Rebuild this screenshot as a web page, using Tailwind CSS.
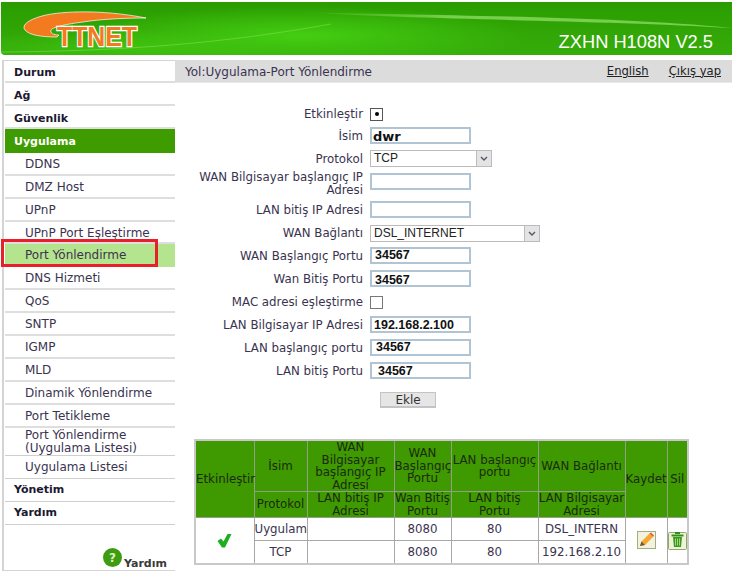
<!DOCTYPE html>
<html lang="tr">
<head>
  <meta charset="UTF-8" />
  <title>ZXHN H108N V2.5</title>
  <script src="https://cdn.jsdelivr.net/npm/@tailwindcss/browser@4"></script>
</head>
<body class="bg-white w-[732px] h-[574px] overflow-hidden font-['DejaVu_Sans',sans-serif] text-[12px] text-[#3a3350]">

  <!-- header -->
  <div class="relative h-[53px] mt-[2px] ml-[1px] rounded-bl-[4px] overflow-hidden bg-gradient-to-b from-[#2a9c00] to-[#36ad0b]">
    <svg class="absolute inset-0" width="731" height="53" viewBox="0 0 731 53">
      <defs>
        <radialGradient id="glow" cx="0.5" cy="0.5" r="0.5">
          <stop offset="0" stop-color="#45d012" stop-opacity="0.95"/>
          <stop offset="1" stop-color="#45d012" stop-opacity="0"/>
        </radialGradient>
        <linearGradient id="band" x1="0" x2="1" y1="0" y2="0">
          <stop offset="0" stop-color="#8fe060" stop-opacity="0"/>
          <stop offset="0.35" stop-color="#8fe060" stop-opacity="0.75"/>
          <stop offset="1" stop-color="#a5e880" stop-opacity="0.6"/>
        </linearGradient>
      </defs>
      <ellipse cx="300" cy="34" rx="230" ry="30" fill="url(#glow)"/>
      <ellipse cx="120" cy="46" rx="170" ry="18" fill="url(#glow)" opacity="0.6"/>
      <path d="M300 10C420 14 600 13 731 26C600 18 420 18 300 10Z" fill="url(#band)"/>
      <path d="M0 50C120 49 220 42 330 22" stroke="#86e055" stroke-width="1" fill="none" opacity="0.55"/>
      <path d="M145 16C110 9 70 8 45 13C28 17 20 23 24 28C28 33 40 35 56 35L58 33C52 33 49 31 50 28C52 25 66 22 82 20C100 17 125 16 145 16Z" fill="#f47a20" stroke="#fff" stroke-width="0.7"/>
      <text x="56" y="44" font-family="'Liberation Sans',sans-serif" font-size="28" font-weight="700" fill="#f47a20" stroke="#fff" stroke-width="2.4" paint-order="stroke" textLength="80" lengthAdjust="spacingAndGlyphs">TTNET</text>
    </svg>
    <div class="absolute right-[19px] bottom-[2px] font-['Liberation_Sans',sans-serif] text-[18.3px] leading-[22px] text-white">ZXHN H108N V2.5</div>
  </div>

  <div class="flex mt-[5px] ml-[2px]">
    <!-- sidebar -->
    <nav class="relative w-[173px] h-[511px] border-l-2 border-t border-b border-[#d4d4d4] pl-[1px]">
      <div class="h-[22px] pl-[9px] leading-[24px] font-bold text-[11px] text-[#1c1830] border-b-2 border-[#dedede]">Durum</div>
      <div class="h-[23px] pl-[9px] leading-[25px] font-bold text-[11px] text-[#1c1830] border-b-2 border-[#dedede]">Ağ</div>
      <div class="h-[23px] pl-[9px] leading-[25px] font-bold text-[11px] text-[#1c1830] border-b-2 border-[#dedede]">Güvenlik</div>
      <div class="h-[24px] pl-[9px] leading-[25px] font-bold text-[11px] text-white bg-[#3f9c00]">Uygulama</div>
      <div class="h-[23px] pl-[20px] leading-[22px] border-b-2 border-[#dedede]">DDNS</div>
      <div class="h-[23px] pl-[20px] leading-[22px] border-b-2 border-[#dedede]">DMZ Host</div>
      <div class="h-[23px] pl-[20px] leading-[22px] border-b-2 border-[#dedede]">UPnP</div>
      <div class="h-[22px] pl-[20px] leading-[22px] border-b-2 border-[#dedede]">UPnP Port Eşleştirme</div>
      <div class="h-[23px] pl-[20px] leading-[23px] bg-[#b5e48f]">Port Yönlendirme</div>
      <div class="h-[23px] pl-[20px] leading-[22px] border-b-2 border-[#dedede]">DNS Hizmeti</div>
      <div class="h-[23px] pl-[20px] leading-[22px] border-b-2 border-[#dedede]">QoS</div>
      <div class="h-[23px] pl-[20px] leading-[22px] border-b-2 border-[#dedede]">SNTP</div>
      <div class="h-[23px] pl-[20px] leading-[22px] border-b-2 border-[#dedede]">IGMP</div>
      <div class="h-[23px] pl-[20px] leading-[22px] border-b-2 border-[#dedede]">MLD</div>
      <div class="h-[23px] pl-[20px] leading-[22px] border-b-2 border-[#dedede]">Dinamik Yönlendirme</div>
      <div class="h-[23px] pl-[20px] leading-[22px] border-b-2 border-[#dedede]">Port Tetikleme</div>
      <div class="h-[28px] pl-[20px] leading-[13px] pt-[1px] border-b border-[#cfcfcf]">Port Yönlendirme<br>(Uygulama Listesi)</div>
      <div class="h-[23px] pl-[20px] leading-[22px] border-b border-[#cfcfcf]">Uygulama Listesi</div>
      <div class="h-[23px] pl-[9px] leading-[22px] font-bold text-[11px] text-[#1c1830] border-b border-[#cfcfcf]">Yönetim</div>
      <div class="h-[23px] pl-[9px] leading-[22px] font-bold text-[11px] text-[#1c1830] border-b border-[#cfcfcf]">Yardım</div>
      <!-- red highlight over the active item -->
      <div class="absolute left-[-3px] top-[178px] w-[157px] h-[28px] border-[3px] border-[#e8202a]"></div>
      <div class="absolute left-[98px] top-[486px] flex items-end gap-[1px]">
        <svg width="21" height="21" viewBox="0 0 21 21">
          <circle cx="10.5" cy="10.5" r="9.5" fill="#3f9c12"/>
          <text x="10.5" y="15" text-anchor="middle" font-family="'DejaVu Sans',sans-serif" font-size="12" font-weight="700" fill="#d8f0c0">?</text>
        </svg>
        <span class="font-bold text-[11px] text-[#3a3a3a] leading-[13px] -mb-[2px]">Yardım</span>
      </div>
    </nav>

    <!-- main -->
    <main class="w-[557px]">
      <div class="h-[23px] pt-[1px] bg-[#dcdcdc] border-b border-[#e8e8e8] flex justify-between items-center pl-[10px] pr-[11px]">
        <span>Yol:Uygulama-Port Yönlendirme</span>
        <span class="flex gap-[20px] text-[11.6px]"><a class="underline text-[#222]">English</a><a class="underline text-[#222]">Çıkış yap</a></span>
      </div>

      <!-- form -->
      <div class="mt-[20px] grid grid-cols-[188px_1fr] gap-x-[7px] items-center text-[11.8px]">
        <label class="h-[22px] leading-[22px] text-right">Etkinleştir</label>
        <div class="h-[22px] flex items-center">
          <span class="w-[13px] h-[13px] border border-[#555] bg-white flex items-center justify-center"><span class="w-[4px] h-[4px] rounded-full bg-black"></span></span>
        </div>

        <label class="h-[23px] leading-[22px] text-right">İsim</label>
        <div class="h-[23px]"><div class="w-[101px] h-[17px] mt-[2px] border-2 border-[#b0c4d4] pl-[1px] font-bold text-[13px] leading-[15px] text-[#111]">dwr</div></div>

        <label class="h-[23px] leading-[22px] text-right">Protokol</label>
        <div class="h-[23px]">
          <div class="w-[122px] h-[17px] mt-[2px] border border-[#bbb] flex justify-between font-['Liberation_Sans',sans-serif] text-[12px] leading-[15px] text-[#222] pl-[3px]">TCP
            <span class="w-[15px] bg-[#e4e4e4] border-l border-[#bbb] flex items-center justify-center"><svg width="8" height="6" viewBox="0 0 8 6"><path d="M1 1l3 3 3-3" fill="none" stroke="#556" stroke-width="1.4"/></svg></span>
          </div>
        </div>

        <label class="h-[28px] leading-[13px] text-right">WAN Bilgisayar başlangıç IP Adresi</label>
        <div class="h-[28px]"><div class="w-[101px] h-[17px] mt-[2px] border-2 border-[#b0c4d4]"></div></div>

        <label class="h-[23px] leading-[22px] text-right">LAN bitiş IP Adresi</label>
        <div class="h-[23px]"><div class="w-[101px] h-[17px] mt-[2px] border-2 border-[#b0c4d4]"></div></div>

        <label class="h-[23px] leading-[22px] text-right">WAN Bağlantı</label>
        <div class="h-[23px]">
          <div class="w-[170px] h-[17px] mt-[3px] border border-[#bbb] flex justify-between font-['Liberation_Sans',sans-serif] text-[12px] leading-[15px] text-[#222] pl-[3px]">DSL_INTERNET
            <span class="w-[15px] bg-[#e4e4e4] border-l border-[#bbb] flex items-center justify-center"><svg width="8" height="6" viewBox="0 0 8 6"><path d="M1 1l3 3 3-3" fill="none" stroke="#556" stroke-width="1.4"/></svg></span>
          </div>
        </div>

        <label class="h-[23px] leading-[22px] text-right">WAN Başlangıç Portu</label>
        <div class="h-[23px]"><div class="w-[101px] h-[17px] mt-[2px] border-2 border-[#b0c4d4] pl-[3px] font-['Liberation_Sans',sans-serif] font-bold text-[#111] text-[12.5px] leading-[12px]">34567</div></div>

        <label class="h-[23px] leading-[22px] text-right">Wan Bitiş Portu</label>
        <div class="h-[23px]"><div class="w-[101px] h-[17px] mt-[2px] border-2 border-[#b0c4d4] pl-[3px] font-['Liberation_Sans',sans-serif] font-bold text-[#111] text-[12.5px] leading-[17px]">34567</div></div>

        <label class="h-[23px] leading-[22px] text-right">MAC adresi eşleştirme</label>
        <div class="h-[23px] flex items-center"><span class="w-[13px] h-[13px] border border-[#777] bg-white"></span></div>

        <label class="h-[23px] leading-[22px] text-right">LAN Bilgisayar IP Adresi</label>
        <div class="h-[23px]"><div class="w-[101px] h-[17px] mt-[2px] border-2 border-[#b0c4d4] pl-[2px] font-['Liberation_Sans',sans-serif] font-bold text-[#111] text-[12.5px] leading-[15px]">192.168.2.100</div></div>

        <label class="h-[23px] leading-[22px] text-right">LAN başlangıç portu</label>
        <div class="h-[23px]"><div class="w-[101px] h-[17px] mt-[2px] border-2 border-[#b0c4d4] pl-[4px] font-['Liberation_Sans',sans-serif] font-bold text-[#111] text-[12.5px] leading-[13px]">34567</div></div>

        <label class="h-[23px] leading-[22px] text-right">LAN bitiş Portu</label>
        <div class="h-[23px]"><div class="w-[101px] h-[17px] mt-[2px] border-2 border-[#b0c4d4] pl-[6px] font-['Liberation_Sans',sans-serif] font-bold text-[#111] text-[12.5px] leading-[15px]">34567</div></div>
      </div>

      <div class="ml-[205px] mt-[9px] w-[56px] h-[16px] bg-[#e6e6e6] border border-[#c4c4c4] border-b-2 text-center leading-[14px] text-[#333]">Ekle</div>

      <!-- table -->
      <table class="mt-[31px] ml-[19px] w-[493px] table-fixed border-collapse border-2 border-[#c8c8c8] text-center text-[11.8px] leading-[12.5px]">
        <colgroup>
          <col class="w-[59px]"><col class="w-[53px]"><col class="w-[87px]"><col class="w-[57px]"><col class="w-[87px]"><col class="w-[87px]"><col class="w-[42px]"><col class="w-[21px]">
        </colgroup>
        <tr class="h-[51px] bg-[#3f9900] text-[#1c2a10]">
          <td rowspan="2" class="border border-[#8f9f88] whitespace-nowrap">Etkinleştir</td>
          <td class="border border-[#8f9f88]">İsim</td>
          <td class="border border-[#8f9f88]">WAN Bilgisayar başlangıç IP Adresi</td>
          <td class="border border-[#8f9f88]">WAN Başlangıç Portu</td>
          <td class="border border-[#8f9f88]">LAN başlangıç portu</td>
          <td class="border border-[#8f9f88]">WAN Bağlantı</td>
          <td rowspan="2" class="border border-[#8f9f88]">Kaydet</td>
          <td rowspan="2" class="border border-[#8f9f88]">Sil</td>
        </tr>
        <tr class="h-[25px] bg-[#3f9900] text-[#1c2a10]">
          <td class="border border-[#8f9f88]">Protokol</td>
          <td class="border border-[#8f9f88]">LAN bitiş IP Adresi</td>
          <td class="border border-[#8f9f88]">Wan Bitiş Portu</td>
          <td class="border border-[#8f9f88]">LAN bitiş Portu</td>
          <td class="border border-[#8f9f88]">LAN Bilgisayar Adresi</td>
        </tr>
        <tr class="h-[23px]">
          <td rowspan="2" class="border border-[#a8a8a8]">
            <svg class="mx-auto" width="15" height="15" viewBox="0 0 15 15"><path d="M0.5 8L4 5.5L6.5 8.5L10.5 1H14.5L8 14.5H5Z" fill="#1fae1f"/></svg>
          </td>
          <td class="border border-[#a8a8a8] whitespace-nowrap">Uygulam</td>
          <td class="border border-[#a8a8a8]"></td>
          <td class="border border-[#a8a8a8]">8080</td>
          <td class="border border-[#a8a8a8]">80</td>
          <td class="border border-[#a8a8a8] whitespace-nowrap">DSL_INTERN</td>
          <td rowspan="2" class="border border-[#a8a8a8]">
            <svg class="mx-auto" width="19" height="18" viewBox="0 0 19 18">
              <rect x="0.5" y="0.5" width="18" height="17" fill="#f4f1e0" stroke="#9db27a"/>
              <path d="M3 15l1.5-4.5 8-8 3.5 3.5-8 8z" fill="#f2a92e"/>
              <path d="M12.5 2.5l3.5 3.5 1-1.5-3-3z" fill="#e0574f"/>
              <path d="M3 15l1.5-4.5 3.5 3.5z" fill="#6b5a40"/>
            </svg>
          </td>
          <td rowspan="2" class="border border-[#a8a8a8]">
            <svg class="mx-auto" width="19" height="19" viewBox="0 0 19 19">
              <rect x="0.5" y="1.5" width="18" height="17" rx="1" fill="#eef3d8" stroke="#8fa868"/>
              <rect x="7" y="1" width="5" height="2" fill="#2f8f1a"/>
              <rect x="3.5" y="3.5" width="12" height="2" fill="#2f8f1a"/>
              <path d="M5 6h9l-1 10H6z" fill="#3a9a20"/>
              <path d="M7.5 7.5v7M9.5 7.5v7M11.5 7.5v7" stroke="#bfe39a" stroke-width="0.8"/>
            </svg>
          </td>
        </tr>
        <tr class="h-[23px]">
          <td class="border border-[#a8a8a8]">TCP</td>
          <td class="border border-[#a8a8a8]"></td>
          <td class="border border-[#a8a8a8]">8080</td>
          <td class="border border-[#a8a8a8]">80</td>
          <td class="border border-[#a8a8a8] whitespace-nowrap">192.168.2.10</td>
        </tr>
      </table>
    </main>
  </div>
</body>
</html>
